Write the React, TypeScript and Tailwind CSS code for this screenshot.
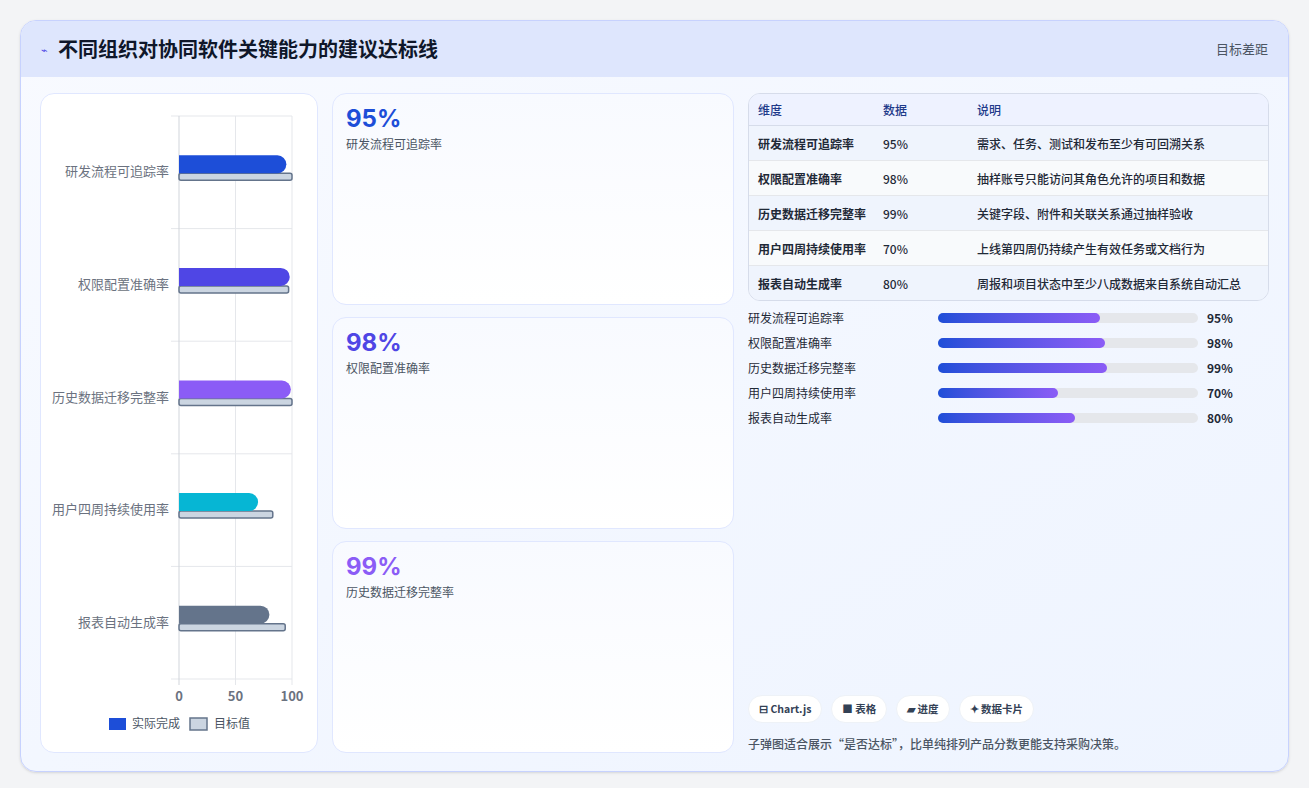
import React from "react";

const items = [
  { name: "研发流程可追踪率", v: 95, t: 100, c: "#1d4ed8", desc: "需求、任务、测试和发布至少有可回溯关系" },
  { name: "权限配置准确率", v: 98, t: 97, c: "#4f46e5", desc: "抽样账号只能访问其角色允许的项目和数据" },
  { name: "历史数据迁移完整率", v: 99, t: 100, c: "#8b5cf6", desc: "关键字段、附件和关联关系通过抽样验收" },
  { name: "用户四周持续使用率", v: 70, t: 83, c: "#06b6d4", desc: "上线第四周仍持续产生有效任务或文档行为" },
  { name: "报表自动生成率", v: 80, t: 94, c: "#64748b", desc: "周报和项目状态中至少八成数据来自系统自动汇总" },
];

function Chart() {
  const x0 = 138, sc = 1.13, top = 22, band = 112.6;
  return (
    <svg width="277" height="658" className="block">
      {[0, 1, 2, 3, 4, 5].map((i) => (
        <line key={i} x1={x0 - 8} x2={x0 + 113} y1={top + i * band} y2={top + i * band} stroke="#e5e7eb" />
      ))}
      {[0, 50, 100].map((g) => (
        <line key={g} x1={x0 + g * sc} x2={x0 + g * sc} y1={top} y2={top + 5 * band + 6} stroke={g === 0 ? "#d1d5db" : "#e5e7eb"} />
      ))}
      {items.map((it, i) => {
        const cy = top + i * band + band / 2 - 4;
        return (
          <g key={i}>
            <text x={x0 - 10} y={cy + 8} textAnchor="end" fontSize="13" fill="#6b7280">{it.name}</text>
            <rect x={x0} y={cy + 5} width={it.t * sc} height={7} rx={2} fill="#cbd5e1" stroke="#64748b" strokeWidth="1.5" />
            <path d={`M${x0} ${cy - 13} H${x0 + it.v * sc - 9} a9 9 0 0 1 9 9 v0 a9 9 0 0 1 -9 9 H${x0} Z`} fill={it.c} />
          </g>
        );
      })}
      {[0, 50, 100].map((g) => (
        <text key={g} x={x0 + g * sc} y={607} textAnchor="middle" fontSize="13" fontWeight="600" fill="#6b7280">{g}</text>
      ))}
      <rect x={68} y={624} width={17} height={12} fill="#1d4ed8" />
      <text x={91} y={634} fontSize="12" fill="#4b5563">实际完成</text>
      <rect x={149} y={624} width={17} height={12} fill="#cbd5e1" stroke="#64748b" strokeWidth="1.5" />
      <text x={173} y={634} fontSize="12" fill="#4b5563">目标值</text>
    </svg>
  );
}

export default function App() {
  return (
    <div className="w-[1309px] h-[788px] bg-[#f3f4f6] p-[20px] pb-[16px]" style={{ fontFamily: '"Noto Sans CJK SC", "Noto Sans", sans-serif' }}>
      <div className="h-full rounded-[16px] border border-[#c7d2fe] overflow-hidden bg-gradient-to-br from-[#f8faff] to-[#eef4ff] flex flex-col shadow-sm">
        <div className="h-[56px] bg-[#dee6fd] flex items-center justify-between px-[20px] shrink-0">
          <div className="flex items-center gap-[10px]">
            <span className="text-[#4f46e5] text-[11px]">⌁</span>
            <span className="text-[20px] font-bold text-[#0f172a]">不同组织对协同软件关键能力的建议达标线</span>
          </div>
          <span className="text-[13px] text-[#4b5563]">目标差距</span>
        </div>
        <div className="flex-1 flex gap-[14px] px-[19px] pt-[16px] pb-[18px]">
          <div className="w-[278px] bg-white rounded-[14px] border border-[#e0e7ff]">
            <Chart />
          </div>
          <div className="w-[402px] flex flex-col gap-[12px]">
            {items.slice(0, 3).map((it) => (
              <div key={it.name} className="flex-1 bg-gradient-to-b from-[#f8faff] to-white rounded-[14px] border border-[#e0e7ff] px-[13px] py-[9px]">
                <div className="text-[24px] font-bold leading-[32px]" style={{ color: it.c, fontFamily: "Inter, sans-serif" }}>{it.v}%</div>
                <div className="text-[12px] text-[#4b5563]">{it.name}</div>
              </div>
            ))}
          </div>
          <div className="flex-1 flex flex-col">
            <div className="rounded-[12px] border border-[#d6dcea] overflow-hidden text-[12px] text-[#1f2937] font-medium">
              <div className="flex h-[32px] items-center bg-[#eef2ff] text-[#1e3a8a] border-b border-[#d6dcea]">
                <div className="w-[134px] pl-[9px]">维度</div>
                <div className="w-[94px]">数据</div>
                <div className="flex-1">说明</div>
              </div>
              {items.map((it, i) => (
                <div key={it.name} className={`flex py-[8.5px] leading-[17px] ${i % 2 ? "bg-[#f8fafc]" : "bg-[#eff4fd]"} ${i < 4 ? "border-b border-[#e5e7eb]" : ""}`}>
                  <div className="w-[134px] pl-[9px] pr-[14px] font-semibold">{it.name}</div>
                  <div className="w-[94px]">{it.v}%</div>
                  <div className="flex-1">{it.desc}</div>
                </div>
              ))}
            </div>
            <div className="flex flex-col gap-[7px] mt-[8px]">
              {items.map((it) => (
                <div key={it.name} className="flex items-center h-[18px] text-[12px]">
                  <div className="w-[190px] text-[#1f2937]">{it.name}</div>
                  <div className="w-[260px] h-[10px] rounded-full bg-[#e5e7eb]">
                    <div className="h-full rounded-full bg-gradient-to-r from-[#1d4ed8] to-[#8b5cf6]" style={{ width: `${it.v * 0.657}%` }} />
                  </div>
                  <div className="ml-[9px] font-bold text-[#1f2937]">{it.v}%</div>
                </div>
              ))}
            </div>
            <div className="mt-auto flex gap-[9px] text-[10.5px] font-semibold text-[#334155]">
              <span className="h-[28px] px-[10px] flex items-center rounded-full bg-white border border-[#eef2f7]">⊟ Chart.js</span>
              <span className="h-[28px] px-[10px] flex items-center rounded-full bg-white border border-[#eef2f7]">■ 表格</span>
              <span className="h-[28px] px-[10px] flex items-center rounded-full bg-white border border-[#eef2f7]">▰ 进度</span>
              <span className="h-[28px] px-[10px] flex items-center rounded-full bg-white border border-[#eef2f7]">✦ 数据卡片</span>
            </div>
            <div className="mt-[12px] text-[12px] text-[#4b5563] font-medium">子弹图适合展示“是否达标”，比单纯排列产品分数更能支持采购决策。</div>
          </div>
        </div>
      </div>
    </div>
  );
}
